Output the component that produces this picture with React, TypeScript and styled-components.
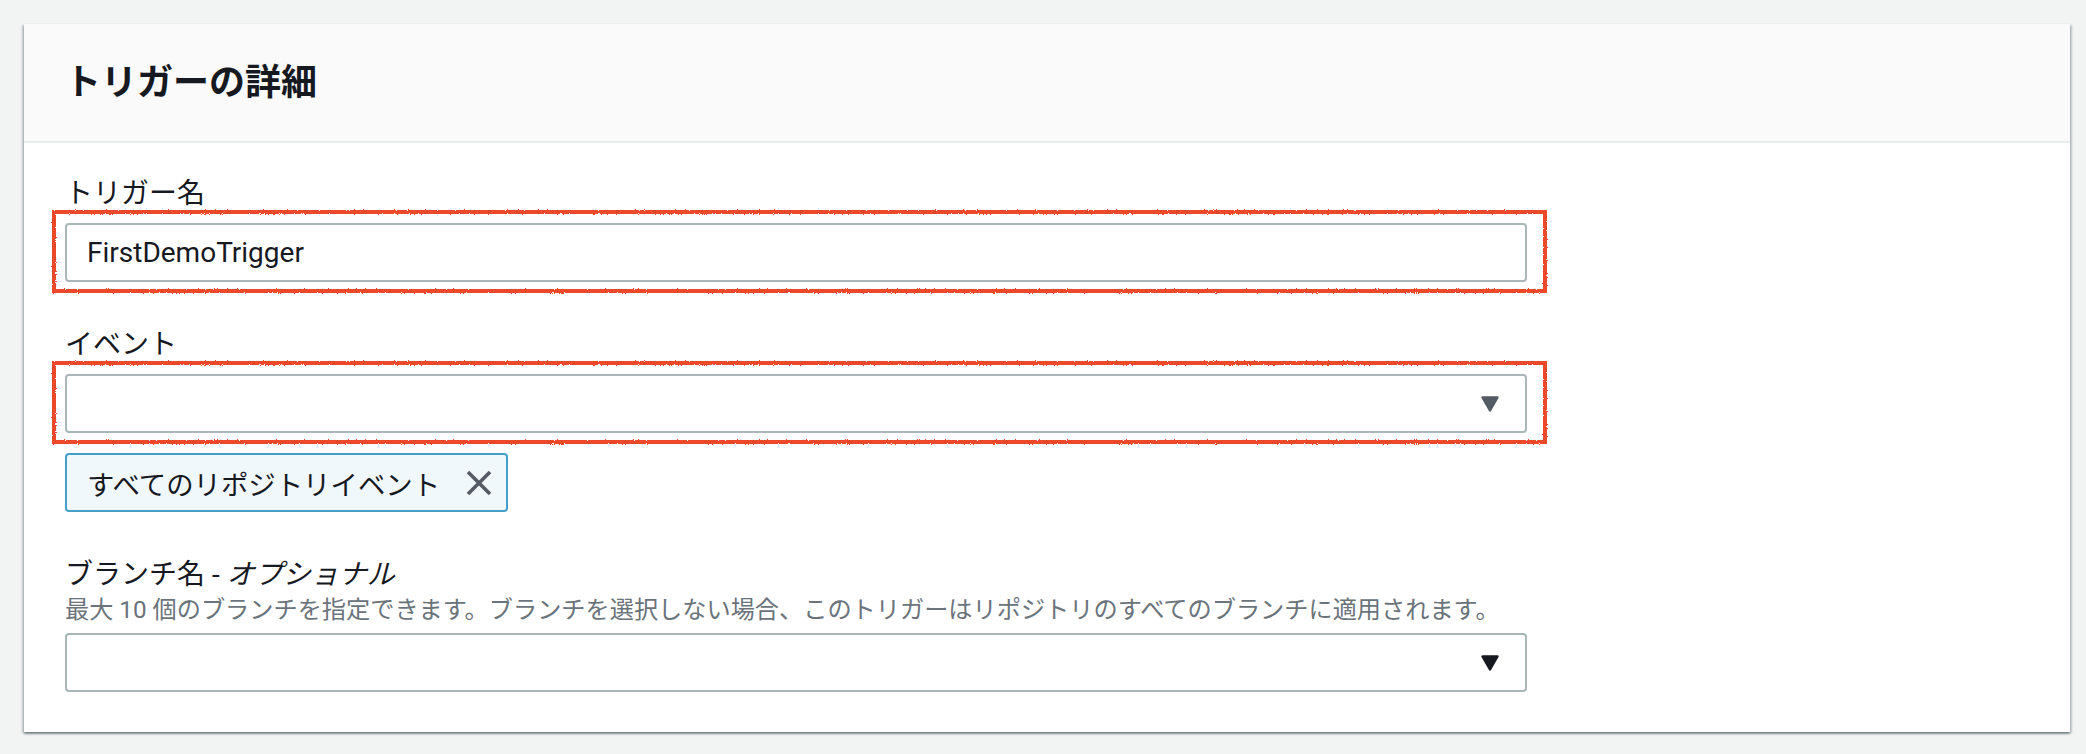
import React from "react";
import styled, { createGlobalStyle } from "styled-components";

const GlobalStyle = createGlobalStyle`
  html, body { margin: 0; padding: 0; background: #f2f3f3; }
  body {
    font-family: Roboto, "Noto Sans CJK JP", sans-serif;
    color: #16191f;
  }
  * { box-sizing: border-box; }
`;

const Page = styled.div`
  padding: 24px 16px 21px 24px;
`;

const Card = styled.section`
  background: #ffffff;
  box-shadow: 0 2px 2px rgba(0, 28, 36, 0.38), 2px 1px 2px rgba(0, 28, 36, 0.18),
    -2px 1px 2px rgba(0, 28, 36, 0.18);
`;

const Header = styled.header`
  height: 119px;
  display: flex;
  align-items: center;
  padding: 0 41px;
  background: #fafafa;
  border-bottom: 2px solid #eaeded;
`;

const Title = styled.h2`
  margin: 0;
  font-family: Roboto, "Noto Sans CJK JP", sans-serif;
  font-size: 36px;
  font-weight: 700;
  line-height: 44px;
  color: #16191f;
`;

const Body = styled.div`
  padding: 28px 41px 40px;
  display: flex;
  flex-direction: column;
  gap: 40px;
`;

const Field = styled.div`
  display: flex;
  flex-direction: column;
  align-items: flex-start;
`;

const Label = styled.label`
  padding-top: 3px;
  font-size: 28px;
  line-height: 40px;
  color: #16191f;
`;

const Optional = styled.i`
  font-style: italic;
`;

const Description = styled.div`
  font-size: 24.2px;
  line-height: 30px;
  color: #6b737b;
`;

const Control = styled.div<{ $gap: number }>`
  position: relative;
  margin-top: ${(p) => p.$gap}px;
  width: 1462px;
`;

const TextInput = styled.input`
  display: block;
  width: 100%;
  height: 59px;
  padding: 0 20px;
  border: 2px solid #aab7b8;
  border-radius: 4px;
  background: #ffffff;
  font-family: Roboto, "Noto Sans CJK JP", sans-serif;
  font-size: 28px;
  color: #16191f;
  outline: none;
`;

const SelectBox = styled.div`
  display: flex;
  align-items: center;
  justify-content: flex-end;
  height: 59px;
  padding: 0 25px 0 20px;
  border: 2px solid #aab7b8;
  border-radius: 4px;
  background: #ffffff;
`;

const Mark = styled.div`
  position: absolute;
  left: -13px;
  right: -20px;
  top: -13px;
  bottom: -11px;
  border: 4px solid #ec4a2b;
  filter: url(#rough);
  pointer-events: none;
`;

const Token = styled.div`
  margin-top: 20px;
  display: inline-flex;
  align-items: center;
  gap: 26px;
  height: 59px;
  padding: 0 14px 0 20px;
  border: 2px solid #44a0c8;
  border-radius: 4px;
  background: #f1f8fc;
  font-size: 27.4px;
  color: #16191f;
`;

const Arrow = ({ color }: { color: string }) => (
  <svg width="20" height="16" viewBox="0 0 20 16" aria-hidden="true">
    <path
      d="M2.5 1.5 L17.5 1.5 L10 14.5 Z"
      fill={color}
      stroke={color}
      strokeWidth="2.4"
      strokeLinejoin="round"
    />
  </svg>
);

const CloseIcon = () => (
  <svg width="26" height="26" viewBox="0 0 26 26" aria-hidden="true">
    <path d="M2 2 L24 24 M24 2 L2 24" stroke="#545b64" strokeWidth="3.6" fill="none" />
  </svg>
);

const RoughFilter = () => (
  <svg width="0" height="0" style={{ position: "absolute" }} aria-hidden="true">
    <filter id="rough" x="-5%" y="-20%" width="110%" height="140%">
      <feTurbulence type="fractalNoise" baseFrequency="0.9" numOctaves="2" seed="3" result="noise" />
      <feDisplacementMap in="SourceGraphic" in2="noise" scale="2.5" />
    </filter>
  </svg>
);

export default function App() {
  return (
    <>
      <GlobalStyle />
      <RoughFilter />
      <Page>
        <Card>
          <Header>
            <Title>トリガーの詳細</Title>
          </Header>
          <Body>
            <Field>
              <Label>トリガー名</Label>
              <Control $gap={9}>
                <TextInput readOnly value="FirstDemoTrigger" />
                <Mark />
              </Control>
            </Field>
            <Field>
              <Label>イベント</Label>
              <Control $gap={9}>
                <SelectBox>
                  <Arrow color="#545b64" />
                </SelectBox>
                <Mark />
              </Control>
              <Token>
                <span>すべてのリポジトリイベント</span>
                <CloseIcon />
              </Token>
            </Field>
            <Field>
              <Label>
                ブランチ名 - <Optional>オプショナル</Optional>
              </Label>
              <Description>
                最大 10 個のブランチを指定できます。ブランチを選択しない場合、このトリガーはリポジトリのすべてのブランチに適用されます。
              </Description>
              <Control $gap={8}>
                <SelectBox>
                  <Arrow color="#16191f" />
                </SelectBox>
              </Control>
            </Field>
          </Body>
        </Card>
      </Page>
    </>
  );
}
